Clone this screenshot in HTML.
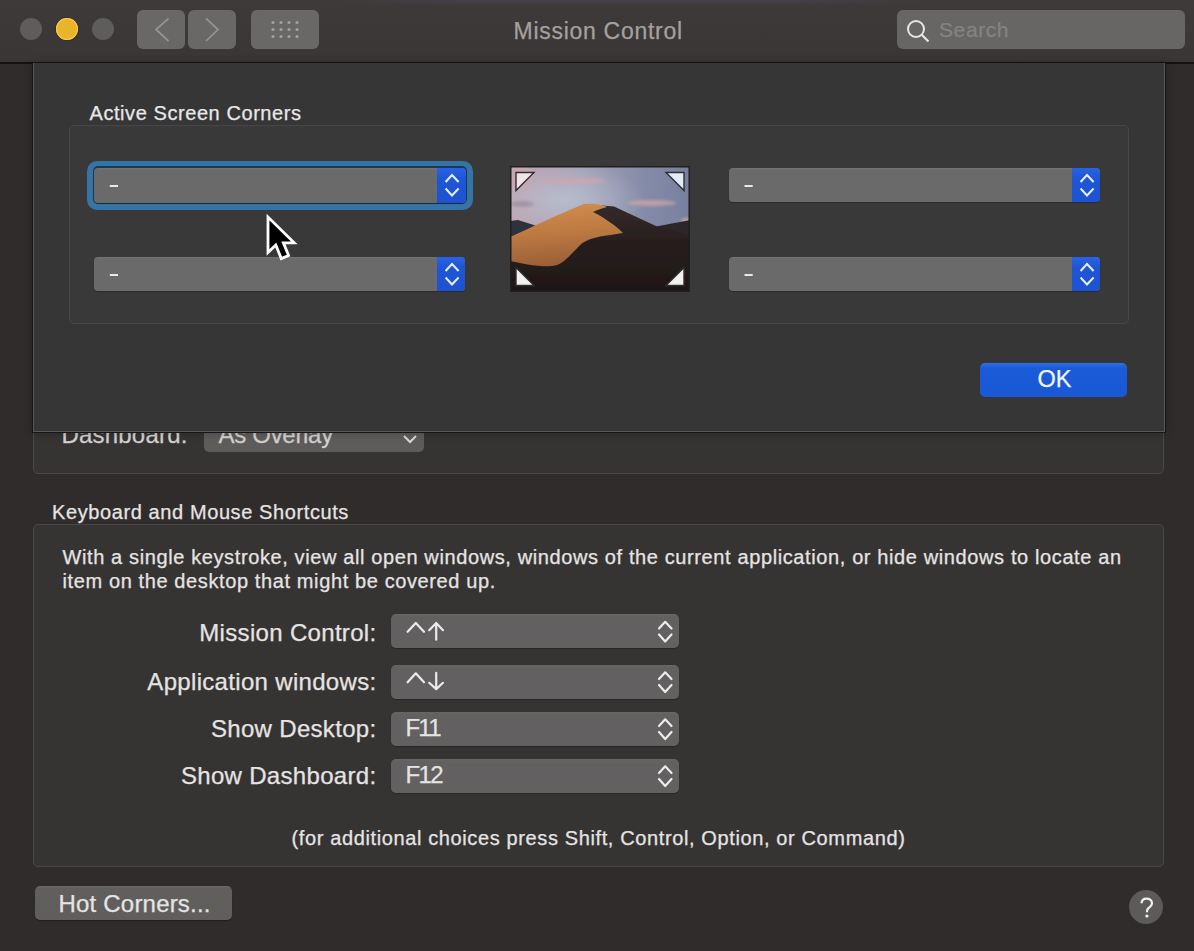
<!DOCTYPE html>
<html><head><meta charset="utf-8">
<style>
*{margin:0;padding:0;box-sizing:border-box}
html,body{width:1194px;height:951px;overflow:hidden}
body{background:#2f2c2b;font-family:"Liberation Sans",sans-serif;position:relative;color:#e6e4e3}
.a{position:absolute}
.t{position:absolute;white-space:pre;line-height:1;-webkit-text-stroke:0.25px currentColor}
#titlebar{left:0;top:0;width:1194px;height:62px;background:linear-gradient(#3e3a3a,#3a3635)}
#tline{left:0;top:62px;width:1194px;height:2px;background:#141111}
.light{border-radius:50%;width:22px;height:22px}
.navb{background:#6a6867;border-radius:6px;height:39px;top:10px}
.pop{background:linear-gradient(#747474,#6a6a6a 6%,#6a6a6a);border-radius:4px;height:34px;box-shadow:0 1px 1px rgba(0,0,0,0.25)}
.step{background:linear-gradient(#2a62e2,#1f56d6 30%,#1d52d0);border-radius:0 4px 4px 0;width:28px;height:34px;right:0;top:0}
.gbox{border:1px solid #4a4847;border-radius:5px}
.spop{background:linear-gradient(#686665,#626060 8%,#626060);border-radius:5px;height:34px;left:391px;width:288px;box-shadow:0 1px 1px rgba(0,0,0,0.25)}
.lbl{font-size:24px;letter-spacing:0.32px;text-align:right;right:817.5px}
</style></head><body>

<!-- title bar -->
<div id="titlebar" class="a"></div>
<div id="tline" class="a"></div>
<div class="a" style="left:330px;top:0;width:600px;height:6px;background:linear-gradient(#47424c,rgba(61,58,58,0));-webkit-mask-image:linear-gradient(90deg,transparent,#000 25%,#000 75%,transparent)"></div>
<div class="a light" style="left:20px;top:18px;background:#5f5d5c"></div>
<div class="a light" style="left:56px;top:18px;background:#e9b42a;box-shadow:0 0 0 1px #3d3010, inset 0 0 0 1px #f3cc5a"></div>
<div class="a light" style="left:92px;top:18px;background:#5f5d5c"></div>
<div class="a navb" style="left:137px;width:48px"></div>
<div class="a navb" style="left:188px;width:48px"></div>
<div class="a navb" style="left:251px;width:68px"></div>
<svg class="a" style="left:0;top:0" width="340" height="62">
  <path d="M168.5 18.5 L156 29.5 L168.5 41" fill="none" stroke="#95938f" stroke-width="1.7"/>
  <path d="M206 18.5 L218 29.5 L206 41" fill="none" stroke="#95938f" stroke-width="1.7"/>
  <g fill="#a3a1a0">
    <circle cx="273" cy="22.5" r="1.6"/><circle cx="281" cy="22.5" r="1.6"/><circle cx="289" cy="22.5" r="1.6"/><circle cx="297" cy="22.5" r="1.6"/>
    <circle cx="273" cy="29.5" r="1.6"/><circle cx="281" cy="29.5" r="1.6"/><circle cx="289" cy="29.5" r="1.6"/><circle cx="297" cy="29.5" r="1.6"/>
    <circle cx="273" cy="36.5" r="1.6"/><circle cx="281" cy="36.5" r="1.6"/><circle cx="289" cy="36.5" r="1.6"/><circle cx="297" cy="36.5" r="1.6"/>
  </g>
</svg>
<div class="t" style="left:513.5px;top:19.6px;font-size:23px;letter-spacing:0.72px;color:#a3a1a0">Mission Control</div>
<div class="a" style="left:897px;top:10px;width:288px;height:39px;background:#686665;border-radius:6px"></div>
<svg class="a" style="left:897px;top:10px" width="60" height="39">
  <circle cx="19" cy="19" r="8" fill="none" stroke="#e8e6e5" stroke-width="2"/>
  <path d="M24.5 24.5 L31.5 31.5" stroke="#e8e6e5" stroke-width="2.2"/>
</svg>
<div class="t" style="left:939px;top:19.1px;font-size:21px;letter-spacing:0.6px;color:#858382">Search</div>

<!-- Background group: dashboard (covered) -->
<div class="a gbox" style="left:33px;top:380px;width:1131px;height:94px;background:#363433"></div>
<div class="t" style="left:61.5px;top:422.8px;font-size:24px;letter-spacing:0.2px;color:#d2d0cf">Dashboard:</div>
<div class="a" style="left:204px;top:418px;width:220px;height:34px;background:#5e5c5b;border-radius:5px"></div>
<div class="t" style="left:218.5px;top:422.8px;font-size:24px;letter-spacing:-0.3px;color:#d2d0cf">As Overlay</div>
<svg class="a" style="left:400px;top:430px" width="22" height="18"><path d="M4 6 L10 12 L16 6" fill="none" stroke="#d8d6d5" stroke-width="2"/></svg>

<!-- Sheet -->
<div class="a" style="left:32px;top:63px;width:1134px;height:370px;background:#363637;border:1px solid #161616;border-top:none;box-shadow:0 0 8px rgba(0,0,0,0.25)"></div>
<div class="a" style="left:33px;top:63px;width:1132px;height:369px;border:1px solid #585858;border-top:none"></div>

<div class="t" style="left:89.5px;top:103px;font-size:20px;letter-spacing:0.57px;color:#e8e8e8">Active Screen Corners</div>
<div class="a gbox" style="left:69px;top:125px;width:1060px;height:199px;background:#393939;border-color:#474747"></div>

<!-- focus ring -->
<div class="a" style="left:87px;top:161px;width:386px;height:49px;border-radius:10px;background:#3574a5"></div>
<div class="a" style="left:92.5px;top:166.2px;width:374.5px;height:38.3px;border-radius:5px;background:#1b3a55"></div>
<div class="a pop" style="left:94px;top:167.6px;width:372px;height:35px;border-radius:4px"><div class="a step" style="height:35px;width:29px;border-radius:0 4px 4px 0"></div></div>
<div class="a pop" style="left:94px;top:257px;width:371px;"><div class="a step"></div></div>
<div class="a pop" style="left:729px;top:168px;width:371px;"><div class="a step"></div></div>
<div class="a pop" style="left:729px;top:257px;width:371px;"><div class="a step"></div></div>
<svg class="a" style="left:0;top:0" width="1194" height="300">
  <g fill="none" stroke="#e6f0ff" stroke-width="2">
    <path d="M445.6 182 L452 175 L458.6 182 M445.6 188.5 L452 195.5 L458.6 188.5"/>
    <path d="M445.6 271 L452 264 L458.6 271 M445.6 277.5 L452 284.5 L458.6 277.5"/>
    <path d="M1080.6 182 L1087 175 L1093.6 182 M1080.6 188.5 L1087 195.5 L1093.6 188.5"/>
    <path d="M1080.6 271 L1087 264 L1093.6 271 M1080.6 277.5 L1087 284.5 L1093.6 277.5"/>
  </g>
  <g fill="#e8e8e8">
    <rect x="109.8" y="185" width="8.2" height="2"/>
    <rect x="109.8" y="274" width="8.2" height="2"/>
    <rect x="744.5" y="185" width="8.2" height="2"/>
    <rect x="744.5" y="274" width="8.2" height="2"/>
  </g>
</svg>

<!-- desktop picture -->
<svg class="a" style="left:510px;top:166px" width="180" height="126" viewBox="0 0 180 126">
  <defs>
    <linearGradient id="sky" x1="0" y1="0" x2="1" y2="0">
      <stop offset="0" stop-color="#c3a3b0"/>
      <stop offset="0.4" stop-color="#a6a3b8"/>
      <stop offset="0.75" stop-color="#848ba8"/>
      <stop offset="1" stop-color="#76809e"/>
    </linearGradient>
    <radialGradient id="haze" cx="0.3" cy="0.42" r="0.45">
      <stop offset="0" stop-color="#b8c0cf" stop-opacity="0.85"/>
      <stop offset="1" stop-color="#b8c0cf" stop-opacity="0"/>
    </radialGradient>
    <linearGradient id="lit" x1="0" y1="0" x2="0.15" y2="1">
      <stop offset="0" stop-color="#d2904e"/>
      <stop offset="0.5" stop-color="#bd7a42"/>
      <stop offset="1" stop-color="#9c6038"/>
    </linearGradient>
    <linearGradient id="shade" x1="0" y1="0" x2="0" y2="1">
      <stop offset="0" stop-color="#352a2b"/>
      <stop offset="0.45" stop-color="#271e1d"/>
      <stop offset="1" stop-color="#1e1716"/>
    </linearGradient>
    <filter id="bl" x="-5%" y="-5%" width="110%" height="110%"><feGaussianBlur stdDeviation="0.55"/></filter>
    <filter id="bl2" x="-50%" y="-50%" width="200%" height="200%"><feGaussianBlur stdDeviation="1.6"/></filter>
  </defs>
  <g filter="url(#bl)">
  <rect width="180" height="126" fill="url(#sky)"/>
  <rect width="180" height="80" fill="url(#haze)"/>
  <g filter="url(#bl2)">
    <ellipse cx="62" cy="15" rx="34" ry="3.5" fill="#cfa5ae" opacity="0.65"/>
    <ellipse cx="10" cy="10" rx="14" ry="12" fill="#caa6b2" opacity="0.7"/>
    <ellipse cx="142" cy="37" rx="24" ry="3" fill="#d6a6a8" opacity="0.7"/>
    <ellipse cx="12" cy="38" rx="12" ry="3" fill="#8f8090" opacity="0.55"/>
    <ellipse cx="176" cy="55" rx="5" ry="3" fill="#d8a0a4" opacity="0.9"/>
  </g>
  <path d="M0 55 L8 54 L27 60 L35 64 L0 80 Z" fill="#2f303d"/>
  <path d="M138 62 L178 54.5 L180 54 L180 90 L138 90 Z" fill="#2b2529"/>
  <path d="M0 72 C30 60 55 46 75 38 L104 40.5 C120 48 135 55 148 61 C160 64 172 67 180 69 L180 126 L0 126 Z" fill="url(#shade)"/>
  <path d="M0 71 C25 60 50 47 75 38 C83 37 92 38.5 97 41 C92 42 87 44 83 46 C95 52 106 60 113 67 C104 68.5 96 69.5 90 70.6 C80 73 75 75 71 78.3 C65 84 60 90 54 95 C48 100 40 101 30 100 C20 99.5 10 97 0 95 Z" fill="url(#lit)"/>
  </g>
  <g stroke="#2e2e2e" stroke-width="1.4" stroke-linejoin="miter">
    <path d="M6 6.5 L24 6.5 L6 24.5 Z" fill="#f1e3e8"/>
    <path d="M174 6.5 L156 6.5 L174 24.5 Z" fill="#e2ecf6"/>
    <path d="M6 119.5 L6 101.5 L24 119.5 Z" fill="#f3f0f0"/>
    <path d="M174 119.5 L174 101.5 L156 119.5 Z" fill="#f3f0f0"/>
  </g>
  <rect x="0.75" y="0.75" width="178.5" height="124.5" fill="none" stroke="#1f1f1f" stroke-width="1.5"/>
</svg>

<!-- OK button -->
<div class="a" style="left:980px;top:363px;width:147px;height:34px;border-radius:5px;background:linear-gradient(#2f6fe6,#1a5bd8 15%,#1a58d4)"></div>
<div class="t" style="left:1037.5px;top:367.5px;font-size:23.5px;color:#f0f6ff">OK</div>

<!-- cursor -->
<svg class="a" style="left:250px;top:200px" width="60" height="70">
  <path d="M18 17 L18 52.5 L25.8 45 L31.3 58.6 L38.6 55.5 L33.4 42.8 L44.2 42.8 Z" fill="#000" stroke="#fff" stroke-width="2.8" stroke-linejoin="miter"/>
</svg>

<!-- Keyboard section -->
<div class="t" style="left:52px;top:502.3px;font-size:20px;letter-spacing:0.6px">Keyboard and Mouse Shortcuts</div>
<div class="a gbox" style="left:33px;top:524px;width:1131px;height:343px;background:#363433"></div>
<div class="t" style="left:62.5px;top:547.1px;font-size:20px;letter-spacing:0.613px">With a single keystroke, view all open windows, windows of the current application, or hide windows to locate an</div>
<div class="t" style="left:62.5px;top:571.1px;font-size:20px;letter-spacing:0.613px">item on the desktop that might be covered up.</div>

<div class="t lbl" style="top:621.2px">Mission Control:</div>
<div class="t lbl" style="top:670px">Application windows:</div>
<div class="t lbl" style="top:717px">Show Desktop:</div>
<div class="t lbl" style="top:764.2px">Show Dashboard:</div>

<div class="a spop" style="top:614px"></div>
<div class="a spop" style="top:665px"></div>
<div class="a spop" style="top:712px"></div>
<div class="a spop" style="top:759px"></div>
<div class="t" style="left:405.5px;top:716px;font-size:24px;letter-spacing:-1.8px">F11</div>
<div class="t" style="left:405.5px;top:763px;font-size:24px;letter-spacing:-1.6px">F12</div>
<svg class="a" style="left:0;top:600px" width="700" height="200">
  <g fill="none" stroke="#ecebea" stroke-width="2.2" stroke-linecap="round" stroke-linejoin="round">
    <path d="M407.6 31.8 L415.8 23 L424 31.8"/>
    <path d="M436.2 23 L436.2 39.7 M429.2 30.2 L436.2 23 L443 30.2"/>
    <path d="M407.6 82.3 L415.8 73.3 L424 82.3"/>
    <path d="M436.2 72.8 L436.2 89.1 M429.2 82.8 L436.2 89.1 L443 82.8"/>
    <path d="M659 28.5 L665.2 21.8 L671.5 28.5 M659 34.5 L665.2 41.5 L671.5 34.5"/>
    <path d="M659 79 L665.2 72.3 L671.5 79 M659 85 L665.2 92 L671.5 85"/>
    <path d="M659 126 L665.2 119.3 L671.5 126 M659 132 L665.2 139 L671.5 132"/>
    <path d="M659 173 L665.2 166.3 L671.5 173 M659 179 L665.2 186 L671.5 179"/>
  </g>
</svg>

<div class="t" style="left:0;width:1197px;text-align:center;top:827.9px;font-size:20px;letter-spacing:0.62px">(for additional choices press Shift, Control, Option, or Command)</div>

<div class="a" style="left:35px;top:886px;width:197px;height:34px;border-radius:5px;background:linear-gradient(#6e6c6b,#615f5e 6%,#605e5d);box-shadow:0 1px 1px rgba(0,0,0,0.3)"></div>
<div class="t" style="left:58.5px;top:891.5px;font-size:24px;letter-spacing:0.2px">Hot Corners...</div>

<svg class="a" style="left:1129px;top:889.5px" width="34" height="34">
  <circle cx="17" cy="17" r="17" fill="#5d5b5a"/>
  <path d="M12.6 13.2 C12.6 10 14.8 8.6 17.6 8.6 C20.6 8.6 23 10.4 23 13.2 C23 15.8 21.2 16.8 19.6 18 C18.4 18.9 17.9 19.8 17.9 22.2" fill="none" stroke="#f2f1f0" stroke-width="2.2"/>
  <circle cx="17.9" cy="26" r="1.6" fill="#f2f1f0"/>
</svg>

</body></html>
